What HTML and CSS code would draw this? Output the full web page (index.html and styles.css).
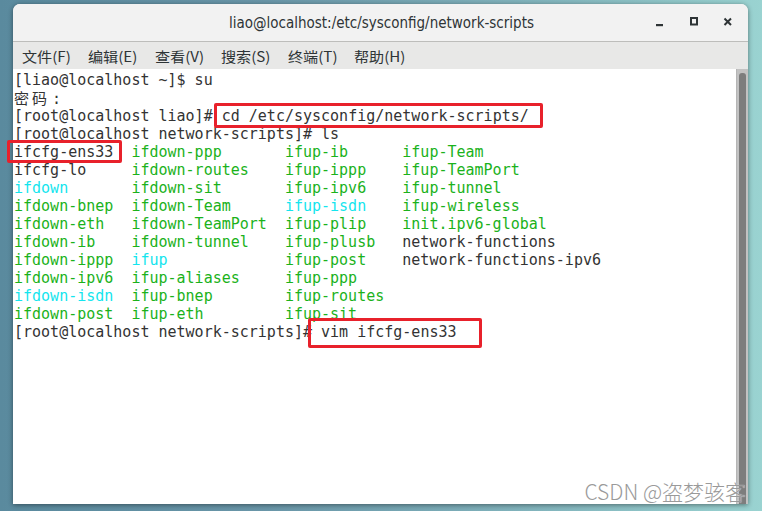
FILE: index.html
```html
<!DOCTYPE html>
<html lang="zh-CN">
<head>
    <meta charset="UTF-8">
    <meta name="viewport" content="width=device-width, initial-scale=1.0">
    <title>liao@localhost:/etc/sysconfig/network-scripts</title>
    <link rel="stylesheet" href="styles.css">
</head>
<body>
    <div class="window">
        <div class="titlebar">
            <div class="title">liao@localhost:/etc/sysconfig/network-scripts</div>
            <div class="controls">
                <svg class="ctl" width="12" height="12" viewBox="0 0 12 12"><rect x="2" y="8" width="7" height="2.2" fill="#2e3436"/></svg>
                <svg class="ctl" width="12" height="12" viewBox="0 0 12 12"><rect x="3" y="2" width="6" height="6.5" fill="none" stroke="#2e3436" stroke-width="2"/></svg>
                <svg class="ctl" width="12" height="12" viewBox="0 0 12 12"><path d="M2.5 2.5 L9 9 M9 2.5 L2.5 9" stroke="#2e3436" stroke-width="2"/></svg>
            </div>
        </div>

        <div class="menubar">
            <div class="menu-item">文件(F)</div>
            <div class="menu-item">编辑(E)</div>
            <div class="menu-item">查看(V)</div>
            <div class="menu-item">搜索(S)</div>
            <div class="menu-item">终端(T)</div>
            <div class="menu-item">帮助(H)</div>
        </div>

        <div class="term-area">
            <div class="terminal">
                <div class="line">[liao@localhost ~]$ su</div>
                <div class="line"><span class="cjk">密码</span>:</div>
                <div class="line">[root@localhost liao]# cd /etc/sysconfig/network-scripts/</div>
                <div class="line">[root@localhost network-scripts]# ls</div>

                <div class="ls">
                    <span>ifcfg-ens33</span><span class="g">ifdown-ppp</span><span class="g">ifup-ib</span><span class="g">ifup-Team</span>
                    <span>ifcfg-lo</span><span class="g">ifdown-routes</span><span class="g">ifup-ippp</span><span class="g">ifup-TeamPort</span>
                    <span class="c">ifdown</span><span class="g">ifdown-sit</span><span class="g">ifup-ipv6</span><span class="g">ifup-tunnel</span>
                    <span class="g">ifdown-bnep</span><span class="g">ifdown-Team</span><span class="c">ifup-isdn</span><span class="g">ifup-wireless</span>
                    <span class="g">ifdown-eth</span><span class="g">ifdown-TeamPort</span><span class="g">ifup-plip</span><span class="g">init.ipv6-global</span>
                    <span class="g">ifdown-ib</span><span class="g">ifdown-tunnel</span><span class="g">ifup-plusb</span><span>network-functions</span>
                    <span class="g">ifdown-ippp</span><span class="c">ifup</span><span class="g">ifup-post</span><span>network-functions-ipv6</span>
                    <span class="g">ifdown-ipv6</span><span class="g">ifup-aliases</span><span class="g">ifup-ppp</span><span></span>
                    <span class="c">ifdown-isdn</span><span class="g">ifup-bnep</span><span class="g">ifup-routes</span><span></span>
                    <span class="g">ifdown-post</span><span class="g">ifup-eth</span><span class="g">ifup-sit</span><span></span>
                </div>

                <div class="line">[root@localhost network-scripts]# vim ifcfg-ens33</div>

                <div class="mark mark-cd"></div>
                <div class="mark mark-file"></div>
                <div class="mark mark-vim"></div>
            </div>
            <div class="scrollbar">
                <div class="thumb"></div>
            </div>
        </div>
    </div>

    <div class="watermark">CSDN @盗梦骇客</div>
</body>
</html>
```

FILE: styles.css
```css
* {
    margin: 0;
    padding: 0;
    box-sizing: border-box;
}

body {
    width: 762px;
    height: 511px;
    overflow: hidden;
    position: relative;
    background: linear-gradient(to right, #5a8a9e 0%, #6a97a9 35%, #86b9c0 75%, #9ad3d1 100%);
    font-family: "Noto Sans", "Noto Sans CJK SC", sans-serif;
}

.window {
    position: relative;
    margin: 4px 0 0 13px;
    width: 735px;
    height: 500px;
    display: flex;
    flex-direction: column;
    border-radius: 7px 7px 0 0;
    box-shadow: 0 1px 5px rgba(0, 0, 0, 0.45);
    background-color: #fff;
}

.titlebar {
    height: 38px;
    background-color: #f2f2f2;
    border-radius: 7px 7px 0 0;
    border-bottom: 1px solid #bdbdbb;
    display: flex;
    align-items: center;
    justify-content: center;
    position: relative;
}

.title {
    font-family: "DejaVu Sans Condensed", "DejaVu Sans", sans-serif;
    font-size: 15px;
    color: #2e3436;
    margin-left: 2px;
}

.controls {
    position: absolute;
    right: 14px;
    top: 12px;
    display: flex;
    gap: 22px;
}

.menubar {
    height: 27px;
    background-color: #e8e8e7;
    display: grid;
    grid-template-columns: repeat(6, 66.4px);
    align-items: center;
    padding-left: 9px;
}

.menu-item {
    font-family: "Noto Sans CJK SC", "Noto Sans", sans-serif;
    font-size: 14px;
    color: #2e3436;
    transform: scaleX(1.08);
    transform-origin: left center;
}

.term-area {
    flex: 1;
    display: flex;
    min-height: 0;
}

.terminal {
    flex: 1;
    position: relative;
    background-color: #fff;
    padding: 2px 0 0 1px;
    font-family: "DejaVu Sans Mono", "Noto Sans CJK SC", monospace;
    font-size: 15px;
    line-height: 18px;
    color: #333;
}

.line {
    white-space: pre;
    height: 18px;
}

.cjk {
    font-family: "Noto Sans CJK SC", sans-serif;
    letter-spacing: 3px;
    margin-right: 2px;
}

.ls {
    display: grid;
    grid-template-columns: 13ch 17ch 13ch auto;
    grid-auto-rows: 18px;
    white-space: pre;
}

.g {
    color: #1bb21b;
}

.c {
    color: #14e5ee;
}

.mark {
    position: absolute;
    border: 3px solid #e8212b;
    border-radius: 2px;
}

.mark-cd {
    left: 201px;
    top: 34px;
    width: 329px;
    height: 25px;
}

.mark-file {
    left: -6px;
    top: 71px;
    width: 115px;
    height: 23px;
}

.mark-vim {
    left: 295px;
    top: 249px;
    width: 174px;
    height: 30px;
}

.scrollbar {
    width: 12px;
    background-color: #c2c2c2;
    border-left: 1px solid #b5b5b5;
    padding: 4px 2px 0 2px;
}

.thumb {
    height: 100%;
    background-color: #7d7d7d;
    border-radius: 3px 3px 0 0;
}

.watermark {
    position: absolute;
    right: 16px;
    bottom: 5px;
    font-family: "Noto Sans CJK SC", "Noto Sans", sans-serif;
    font-size: 21px;
    font-weight: 300;
    color: #9a9a9a;
    text-shadow: 0 0 1px #fff;
}
```
